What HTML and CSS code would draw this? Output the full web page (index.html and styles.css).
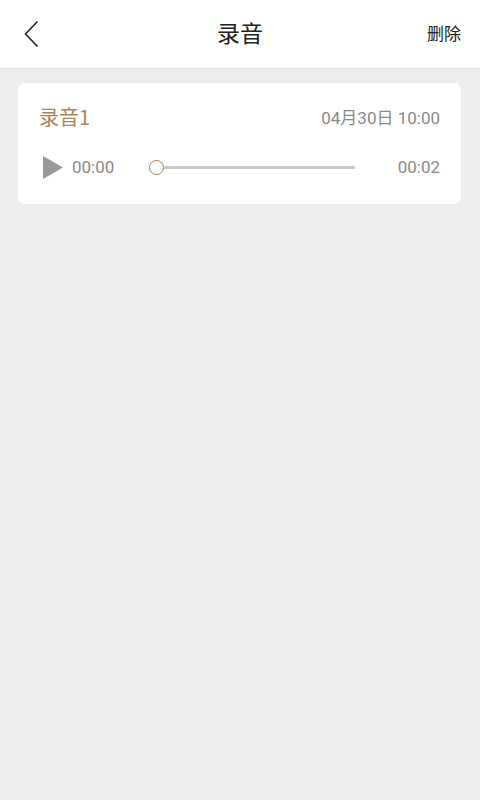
FILE: index.html
```html
<!DOCTYPE html>
<html lang="zh">
<head>
<meta charset="utf-8">
<title>录音</title>
<link rel="stylesheet" href="styles.css">
</head>
<body>
<header class="topbar">
  <div class="back">
    <svg width="16" height="28" viewBox="0 0 16 28"><path d="M13.5 1.5 L1.5 14 L13.5 26.5" fill="none" stroke="#222" stroke-width="1.6"/></svg>
  </div>
  <h1 class="title">录音</h1>
  <div class="action">删除</div>
</header>
<main class="content">
  <section class="card">
    <div class="row-top">
      <span class="name">录音1</span>
      <span class="date">04月30日 10:00</span>
    </div>
    <div class="row-player">
      <svg class="play" width="20" height="23" viewBox="0 0 20 23"><path d="M0 0 L20 11.5 L0 23 Z" fill="#999"/></svg>
      <span class="time cur">00:00</span>
      <div class="slider">
        <span class="knob"></span>
        <span class="track"></span>
      </div>
      <span class="time total">00:02</span>
    </div>
  </section>
</main>
</body>
</html>
```
FILE: styles.css
```css
html, body {
  margin: 0;
  padding: 0;
}
body {
  width: 480px;
  height: 800px;
  background: #eeeeee;
  font-family: "Noto Sans CJK SC", "Roboto", sans-serif;
  overflow: hidden;
}
.topbar {
  height: 68px;
  background: #fff;
  border-bottom: 1px solid #dedede;
  display: flex;
  align-items: center;
  justify-content: space-between;
  padding: 0 19px 0 24px;
  position: relative;
}
.back {
  display: flex;
  align-items: center;
  height: 28px;
}
.back svg { display: block; }
.title {
  position: absolute;
  left: 0;
  right: 0;
  top: 0;
  text-align: center;
  margin: 0;
  font-size: 23px;
  font-weight: 400;
  color: #222;
  line-height: 64px;
  pointer-events: none;
}
.action {
  font-size: 17px;
  color: #222;
  margin-bottom: 3px;
}
.content {
  padding: 14px 19px 0 18px;
}
.card {
  background: #fff;
  border-radius: 7px;
  height: 121px;
  box-sizing: border-box;
  padding: 18px 21px 0 21px;
}
.row-top {
  display: flex;
  justify-content: space-between;
  align-items: center;
  height: 30px;
}
.name {
  font-size: 20px;
  color: #b0835a;
}
.date {
  font-family: "Roboto", "Noto Sans CJK SC", sans-serif;
  font-size: 17px;
  color: #8a8a8a;
}
.row-player {
  display: flex;
  align-items: center;
  margin-top: 21px;
  height: 30px;
}
.play {
  display: block;
  margin-left: 4px;
}
.time {
  font-family: "Roboto", sans-serif;
  font-size: 17px;
  color: #8a8a8a;
}
.cur {
  margin-left: 9px;
}
.slider {
  display: flex;
  align-items: center;
  margin-left: 35px;
  width: 206px;
}
.knob {
  width: 13px;
  height: 13px;
  border: 1.5px solid #a8825c;
  border-radius: 50%;
  background: #fff;
  flex: none;
}
.track {
  flex: 1;
  height: 3px;
  background: #c8c8c8;
  border-radius: 2px;
}
.total {
  margin-left: auto;
}
```
